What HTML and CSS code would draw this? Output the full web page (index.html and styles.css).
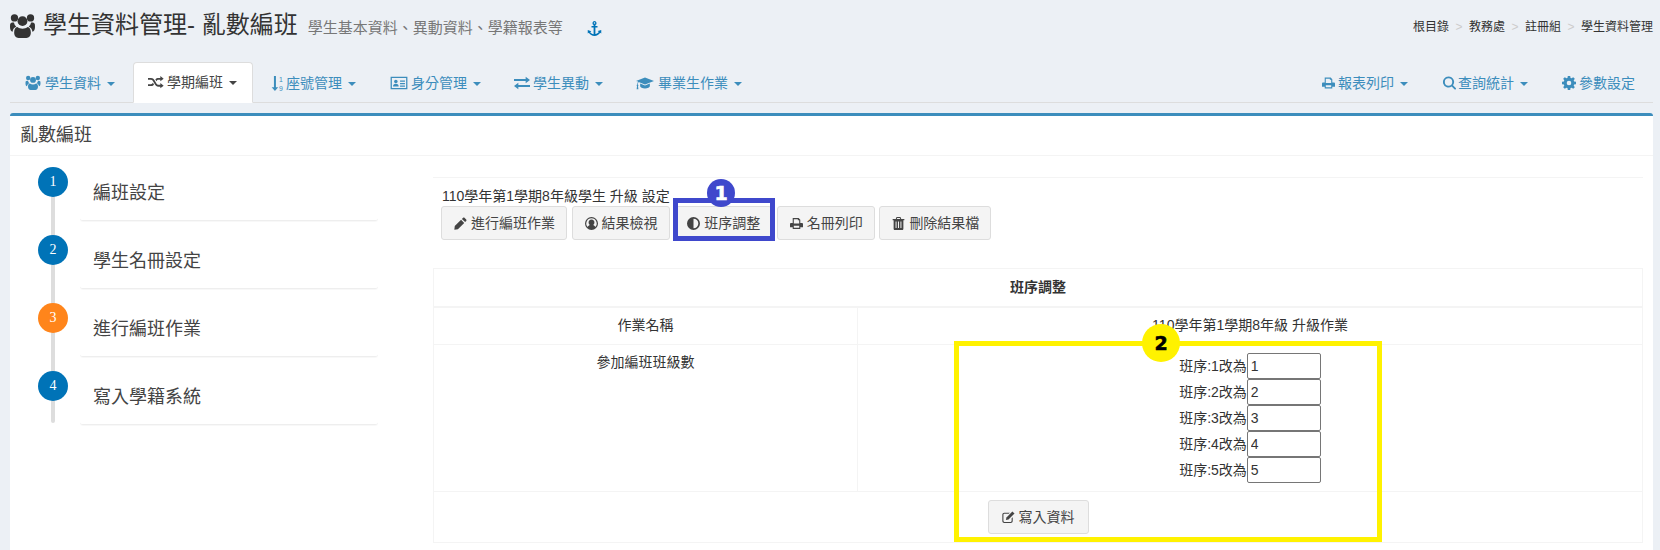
FILE: index.html
```html
<!DOCTYPE html>
<html lang="zh-Hant">
<head>
    <meta charset="UTF-8">
    <title>亂數編班</title>
    <link rel="stylesheet" href="styles.css">
</head>
<body>
    <svg class="sprite" xmlns="http://www.w3.org/2000/svg">
        <symbol id="i-users" viewBox="0 0 24 24">
            <circle cx="12" cy="7.800" r="4.700"/><circle cx="4.300" cy="4.700" r="3.500"/><circle cx="19.700" cy="4.700" r="3.500"/>
            <path d="M7 13.500c1.400 1 3.100 1.500 5 1.500s3.600-.5 5-1.500c2 .3 3 2.400 3 5.300 0 3.100-1.700 5.200-4.200 5.200H8.200C5.700 24 4 21.900 4 18.800c0-2.900 1-5 3-5.300z"/>
            <path d="M.2 10.500C1 9.500 2.100 9 3.900 9.300c.3 1.500 1 2.800 2.100 3.700-2 1-3.300 2.800-3.500 4.900C.9 17.600 0 16.200 0 13.500c0-1.200.1-2.300.2-3zM23.800 10.500C23 9.500 21.900 9 20.100 9.300c-.3 1.500-1 2.800-2.100 3.700 2 1 3.300 2.800 3.500 4.900 1.600-.3 2.500-1.700 2.500-4.400 0-1.200-.1-2.300-.2-3z"/>
        </symbol>
        <symbol id="i-random" viewBox="0 0 24 20">
            <path d="M0 4h4.500c3 0 4.500 2 6 4.500l1.500 2.500c1.200 2 2 3.200 4 3.200h2.500V11.500L23.500 15.500 18.500 19.500V17h-2.500c-3.500 0-5-2.200-6.500-4.700L8 9.800C6.900 8 6.200 6.800 4.500 6.800H0z"/>
            <path d="M0 13.200h4.500c1.400 0 2.100-.8 2.900-2l1.600 2.600C8 15.500 6.700 16 4.500 16H0zM11 6.200C12.300 4.700 13.700 4 16 4h2.500V1l5 4-5 4V6.800H16c-1.500 0-2.300.8-3.300 2z"/>
        </symbol>
        <symbol id="i-sort" viewBox="0 0 19 24">
            <path d="M3.800 0h3.200v18h3.600L5.400 24 .2 18h3.600z"/>
            <text x="12" y="9.500" font-size="11" font-family="Liberation Sans, sans-serif">1</text>
            <text x="12" y="23.500" font-size="11" font-family="Liberation Sans, sans-serif">9</text>
        </symbol>
        <symbol id="i-card" viewBox="0 0 24 20">
            <path fill-rule="evenodd" d="M0 1h24v18H0zM1.800 2.800v14.400h20.400V2.800z"/>
            <circle cx="7.500" cy="8" r="2.500"/>
            <path d="M3.500 15c0-2.800 1.400-4 4-4s4 1.200 4 4zM13.500 6.500H20.500V8.300H13.500zM13.500 10H20.500V11.800H13.500zM13.500 13.500H20.500V15.300H13.500z"/>
        </symbol>
        <symbol id="i-exchange" viewBox="0 0 24 20">
            <path d="M0 6h17.500V2.500L24 7.500l-6.500 5V9H0z" transform="translate(0 -2)"/>
            <path d="M24 13H6.500V9.500L0 14.500l6.500 5V16H24z"/>
        </symbol>
        <symbol id="i-cap" viewBox="0 0 26 20">
            <path d="M13 2 26 7 13 12 3.800 8.500C3 9.500 2.700 11 2.600 12.300c.5.300.8.700.8 1.200 0 .4-.2.800-.5 1l.6 4.500H.9l.6-4.500c-.3-.2-.5-.6-.5-1 0-.5.300-1 .8-1.200.1-1.800.5-3.300 1.200-4.500L0 7z"/>
            <path d="M6 10.800 13 13.500l7-2.700v4c0 1.700-3.200 3.200-7 3.200s-7-1.500-7-3.200z"/>
        </symbol>
        <symbol id="i-print" viewBox="0 0 24 20">
            <path fill-rule="evenodd" d="M5 0h11l3 3v6h3c1.100 0 2 .9 2 2v6h-5v3H5v-3H0v-6c0-1.100.9-2 2-2h3zM7 2v8h10V4h-2.500V2zM7 14v4h10v-4z"/>
        </symbol>
        <symbol id="i-search" viewBox="0 0 20 20">
            <path fill-rule="evenodd" d="M8.500 0a8.500 8.500 0 0 1 6.900 13.500l4.200 4.200c.6.600.6 1.400 0 2-.5.500-1.400.5-2 0l-4.200-4.300A8.500 8.500 0 1 1 8.500 0zm0 2.800a5.700 5.700 0 1 0 0 11.400 5.700 5.700 0 0 0 0-11.400z"/>
        </symbol>
        <symbol id="i-cog" viewBox="0 0 20 20">
            <path fill-rule="evenodd" d="M8.300 0h3.400l.5 2.700 1.500.6L16 1.700l2.300 2.300-1.600 2.300.6 1.500 2.700.5v3.400l-2.700.5-.6 1.500 1.600 2.300-2.300 2.300-2.300-1.600-1.500.6-.5 2.700H8.300l-.5-2.700-1.500-.6L4 18.300 1.700 16l1.600-2.300-.6-1.500L0 11.700V8.300l2.700-.5.6-1.500L1.700 4 4 1.700l2.300 1.600 1.500-.6zM10 6.700a3.300 3.300 0 1 0 0 6.600 3.300 3.300 0 0 0 0-6.600z"/>
        </symbol>
        <symbol id="i-pencil" viewBox="0 0 20 20">
            <path d="M14 1.200c.6-.6 1.500-.6 2.100 0l2.700 2.700c.6.600.6 1.500 0 2.100L17 7.800 12.200 3zM10.900 4.300l4.800 4.800L6 18.800.5 19.500 1.200 14z"/>
        </symbol>
        <symbol id="i-user" viewBox="0 0 20 20">
            <path fill-rule="evenodd" d="M10 0a10 10 0 1 1 0 20 10 10 0 0 1 0-20zm0 2a8 8 0 0 0-5.800 13.500c.7-1.800 2-2.900 3.400-3.300a4.500 4.500 0 1 1 4.800 0c1.400.4 2.700 1.500 3.400 3.300A8 8 0 0 0 10 2z"/>
        </symbol>
        <symbol id="i-adjust" viewBox="0 0 20 20">
            <path fill-rule="evenodd" d="M10 0a10 10 0 1 1 0 20 10 10 0 0 1 0-20zm0 2.600v14.800a7.400 7.400 0 0 0 0-14.800z"/>
        </symbol>
        <symbol id="i-trash" viewBox="0 0 18 20">
            <path fill-rule="evenodd" d="M6 0h6l1.300 3H18v2h-1.500v13c0 1.100-.8 2-1.800 2H3.300c-1 0-1.800-.9-1.800-2V5H0V3h4.700zM7 1.500 6.400 3h5.200L11 1.500zM4.500 7v10H6V7zM8.200 7v10h1.600V7zM12 7v10h1.500V7z"/>
        </symbol>
        <symbol id="i-edit" viewBox="0 0 20 20">
            <path d="M3.500 2.500H12L10.300 4.200H3.500c-.7 0-1.300.6-1.300 1.300v10c0 .7.600 1.300 1.300 1.300h10c.7 0 1.300-.6 1.300-1.300v-4.300l1.700-1.700v6c0 1.700-1.300 3-3 3h-10c-1.700 0-3-1.300-3-3v-10c0-1.700 1.300-3 3-3z"/>
            <path d="M16 .8 19.200 4 10 13.200l-4 .8.800-4z"/>
        </symbol>
        <symbol id="i-anchor" viewBox="0 0 20 20">
            <path fill-rule="evenodd" d="M10 0a2.800 2.800 0 0 1 1.200 5.300v1.500H14v1.800h-2.800v8.700c2-.3 3.500-1.300 4.500-2.700l-1.400-1.300L19 12v4.800l-1.400-1.100C16 18.300 13.200 20 10 20s-6-1.700-7.600-4.300L1 16.800V12l4.700 1.600-1.400 1.300c1 1.400 2.500 2.400 4.500 2.700V8.600H6V6.800h2.800V5.300A2.800 2.800 0 0 1 10 0zm0 1.800a1 1 0 1 0 0 2 1 1 0 0 0 0-2z"/>
        </symbol>
    </svg>

    <header class="page-head">
        <h1 class="page-title">
            <svg class="title-icon"><use href="#i-users"/></svg>學生資料管理- 亂數編班<small>學生基本資料、異動資料、學籍報表等</small><svg class="anchor-icon"><use href="#i-anchor"/></svg>
        </h1>
        <ol class="breadcrumb">
            <li>根目錄</li>
            <li>教務處</li>
            <li>註冊組</li>
            <li>學生資料管理</li>
        </ol>
    </header>

    <nav class="tabs">
        <a class="tab"><svg class="ico ico-users"><use href="#i-users"/></svg>學生資料<span class="caret"></span></a>
        <a class="tab active"><svg class="ico w-15"><use href="#i-random"/></svg>學期編班<span class="caret"></span></a>
        <a class="tab tab-sort"><svg class="ico ico-sort"><use href="#i-sort"/></svg>座號管理<span class="caret"></span></a>
        <a class="tab"><svg class="ico w-18"><use href="#i-card"/></svg>身分管理<span class="caret"></span></a>
        <a class="tab"><svg class="ico w-15"><use href="#i-exchange"/></svg>學生異動<span class="caret"></span></a>
        <a class="tab"><svg class="ico ico-cap"><use href="#i-cap"/></svg>畢業生作業<span class="caret"></span></a>
        <a class="tab push tab-print"><svg class="ico ico-print"><use href="#i-print"/></svg>報表列印<span class="caret"></span></a>
        <a class="tab tab-search"><svg class="ico ico-search"><use href="#i-search"/></svg>查詢統計<span class="caret"></span></a>
        <a class="tab"><svg class="ico w-13"><use href="#i-cog"/></svg>參數設定</a>
    </nav>

    <section class="panel">
        <h3 class="panel-title">亂數編班</h3>
        <div class="panel-body">
            <ul class="steps">
                <li class="step"><span class="dot">1</span><div class="step-card">編班設定</div></li>
                <li class="step"><span class="dot">2</span><div class="step-card">學生名冊設定</div></li>
                <li class="step"><span class="dot current">3</span><div class="step-card">進行編班作業</div></li>
                <li class="step"><span class="dot">4</span><div class="step-card">寫入學籍系統</div></li>
            </ul>

            <div class="main">
                <div class="toolbar">
                    <p class="caption">110學年第1學期8年級學生 升級 設定</p>
                    <div class="btn-row">
                        <button class="btn"><svg class="btn-ico"><use href="#i-pencil"/></svg>進行編班作業</button>
                        <button class="btn"><svg class="btn-ico"><use href="#i-user"/></svg>結果檢視</button>
                        <button class="btn"><svg class="btn-ico"><use href="#i-adjust"/></svg>班序調整</button>
                        <button class="btn"><svg class="btn-ico"><use href="#i-print"/></svg>名冊列印</button>
                        <button class="btn"><svg class="btn-ico"><use href="#i-trash"/></svg>刪除結果檔</button>
                    </div>
                </div>

                <table class="grid">
                    <tr><th colspan="2">班序調整</th></tr>
                    <tr>
                        <td class="col-name">作業名稱</td>
                        <td>110學年第1學期8年級 升級作業</td>
                    </tr>
                    <tr>
                        <td class="col-name">參加編班班級數</td>
                        <td class="order-cell">
                            <div class="order-row">班序:1改為<input class="order-input" value="1"></div>
                            <div class="order-row">班序:2改為<input class="order-input" value="2"></div>
                            <div class="order-row">班序:3改為<input class="order-input" value="3"></div>
                            <div class="order-row">班序:4改為<input class="order-input" value="4"></div>
                            <div class="order-row">班序:5改為<input class="order-input" value="5"></div>
                        </td>
                    </tr>
                    <tr>
                        <td colspan="2" class="save-cell"><button class="btn btn-save"><svg class="btn-ico"><use href="#i-edit"/></svg>寫入資料</button></td>
                    </tr>
                </table>
            </div>

            <!-- annotations drawn on top of the screen -->
            <div class="mark mark-blue"></div>
            <div class="badge badge-blue">1</div>
            <div class="mark mark-yellow"></div>
            <div class="badge badge-yellow">2</div>
        </div>
    </section>
</body>
</html>
```

FILE: styles.css
```css
* {
    box-sizing: border-box;
}
html, body {
    height: 550px;
    overflow: hidden;
}
body {
    margin: 0;
    padding: 0 7px 0 10px;
    background: #ecf0f5;
    color: #333;
    font-family: "Liberation Sans", "Noto Sans CJK TC", sans-serif;
    font-size: 14px;
    line-height: 20px;
}
.sprite {
    display: none;
}

/* page head */
.page-head {
    display: flex;
    justify-content: space-between;
    height: 62px;
}
.page-title {
    margin: 0;
    padding-top: 11px;
    font-size: 24px;
    font-weight: 400;
    line-height: 28px;
    white-space: nowrap;
}
.page-title small {
    margin-left: 10px;
    font-size: 15px;
    color: #777;
}
.title-icon {
    width: 25px;
    height: 25px;
    margin-right: 8px;
    vertical-align: -5px;
    fill: #333;
}
.anchor-icon {
    width: 15px;
    height: 15px;
    margin-left: 24px;
    vertical-align: -3px;
    fill: #0073b7;
}
.breadcrumb {
    display: flex;
    margin: 0;
    padding: 18px 0 0;
    list-style: none;
    font-size: 12px;
    line-height: 18px;
    white-space: nowrap;
}
.breadcrumb li + li::before {
    content: ">";
    padding: 0 6.5px;
    color: #ccc;
}

/* tabs */
.tabs {
    display: flex;
    height: 41px;
    padding-right: 3px;
    border-bottom: 1px solid #ddd;
}
.tab {
    display: block;
    height: 41px;
    margin-right: 3px;
    padding: 10px 15px;
    border-top: 1px solid transparent;
    border-radius: 4px 4px 0 0;
    color: #3c8dbc;
    white-space: nowrap;
}
.tab.active {
    background: #fff;
    border: 1px solid #ddd;
    border-bottom-color: #fff;
    padding: 9px 15px 10px 14px;
    color: #444;
}
.tab.push {
    margin-left: auto;
}
.tab:last-child {
    margin-right: 0;
}
.tab-sort {
    margin-right: 4px;
}
.tab-print {
    margin-right: 5px;
}
.tab-search {
    margin-right: 4px;
}
.ico {
    height: 14px;
    margin-right: 3px;
    vertical-align: -2px;
    fill: currentColor;
}
.ico-users {
    width: 16px;
    height: 15px;
    margin-right: 4px;
}
.ico-sort {
    width: 13px;
    height: 15px;
    margin-right: 2px;
    vertical-align: -3px;
}
.ico-cap {
    width: 18px;
    margin-right: 4px;
}
.ico-print {
    width: 13px;
}
.ico-search {
    width: 13px;
    margin-right: 2px;
}
.w-13 { width: 14px; }
.w-15 { width: 16px; }
.w-18 { width: 18px; }
.caret {
    display: inline-block;
    width: 0;
    height: 0;
    margin-left: 6px;
    vertical-align: middle;
    border-top: 4px solid;
    border-left: 4px solid transparent;
    border-right: 4px solid transparent;
}

/* panel */
.panel {
    height: 437px;
    margin-top: 10px;
    background: #fff;
    border-top: 3px solid #3c8dbc;
    border-radius: 3px 3px 0 0;
}
.panel-title {
    height: 40px;
    margin: 0;
    padding: 9px 10px;
    border-bottom: 1px solid #f4f4f4;
    font-size: 18px;
    font-weight: 400;
    line-height: 20px;
    color: #444;
}
.panel-body {
    position: relative;
    display: flex;
    padding: 11px 10px 0 28px;
}

/* stepper */
.steps {
    position: relative;
    width: 340px;
    margin: 0 55px 0 0;
    padding: 0;
    list-style: none;
    flex: none;
}
.steps::before {
    content: "";
    position: absolute;
    left: 13px;
    top: 10px;
    width: 4px;
    height: 246px;
    background: #ddd;
    border-radius: 2px;
}
.step {
    position: relative;
    display: flex;
    height: 68px;
}
.dot {
    width: 30px;
    height: 30px;
    margin-right: 12px;
    border-radius: 50%;
    background: #0073b7;
    color: #fff;
    font-family: "Liberation Serif", serif;
    font-size: 14px;
    line-height: 30px;
    text-align: center;
}
.dot.current {
    background: #ff851b;
}
.step-card {
    width: 298px;
    height: 54px;
    padding: 16px 13px;
    border-bottom: 1px solid #eee;
    border-radius: 3px;
    box-shadow: 0 1px 1px rgba(0, 0, 0, .03);
    font-size: 18px;
    line-height: 20px;
    color: #444;
}

/* right side */
.main {
    flex: 1;
    padding-top: 10px;
}
.toolbar {
    height: 91px;
    padding: 9px 8px 0;
    border-top: 1px solid #f4f4f4;
}
.caption {
    margin: 0;
    padding-left: 1px;
    font-size: 14px;
    line-height: 19px;
}
.btn-row {
    display: flex;
    gap: 4.6px;
}
.btn {
    height: 34px;
    padding: 6px 11px 6px 12px;
    background: #f4f4f4;
    border: 1px solid #ddd;
    border-radius: 3px;
    color: #444;
    font: inherit;
    font-size: 14px;
    line-height: 20px;
    white-space: nowrap;
}
.btn-save {
    padding: 6px 13px;
}
.btn-ico {
    width: 13px;
    height: 13px;
    margin-right: 4px;
    vertical-align: -2px;
    fill: currentColor;
}
.grid {
    width: 100%;
    border-collapse: collapse;
    border: 1px solid #f4f4f4;
    text-align: center;
}
.grid th, .grid td {
    padding: 7px 8px 9px;
    border: 1px solid #f4f4f4;
    vertical-align: top;
}
.grid th {
    height: 38px;
    border-bottom-width: 2px;
    padding-top: 8px;
}
.grid .order-cell, .grid .save-cell {
    padding: 8px;
}
.col-name {
    width: 424px;
}
.order-row {
    height: 26px;
    white-space: nowrap;
}
.order-input {
    width: 74px;
    height: 26px;
    padding: 1px 3px;
    border: 1px solid #767676;
    border-radius: 2px;
    color: #333;
    font: inherit;
    font-size: 14px;
}

/* annotations */
.mark {
    position: absolute;
}
.mark-blue {
    left: 663px;
    top: 42px;
    width: 102px;
    height: 43px;
    border: 5px solid #3f48cc;
}
.mark-yellow {
    left: 944px;
    top: 185px;
    width: 428px;
    height: 201px;
    border: 5px solid #fff200;
}
.badge {
    position: absolute;
    border-radius: 50%;
    font-family: "DejaVu Sans", sans-serif;
    font-weight: 700;
    text-align: center;
    -webkit-text-stroke: .6px currentColor;
}
.badge-blue {
    left: 697px;
    top: 23px;
    width: 28px;
    height: 28px;
    background: #3f48cc;
    color: #fff;
    font-size: 19px;
    line-height: 28px;
}
.badge-yellow {
    left: 1132px;
    top: 168px;
    width: 38px;
    height: 38px;
    background: #fff200;
    color: #000;
    font-size: 19px;
    line-height: 38px;
}
```
